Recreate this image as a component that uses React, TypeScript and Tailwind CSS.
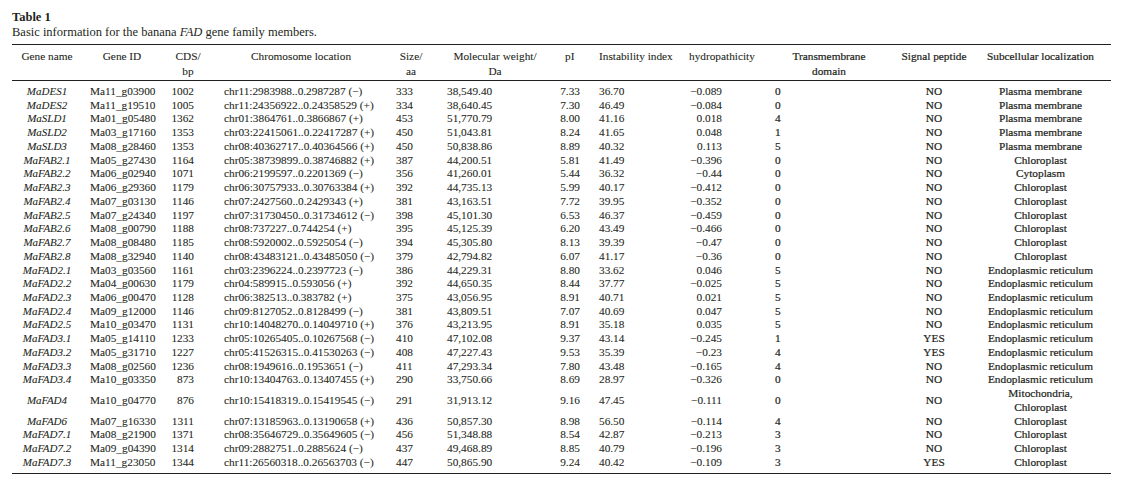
type Row = [string, string, string, string, string, string, string, string, string, string, string, string]

const ER = "Endoplasmic reticulum"
const PM = "Plasma membrane"
const CP = "Chloroplast"

const rows: Row[] = [
  ["MaDES1", "Ma11_g03900", "1002", "chr11:2983988..0.2987287 (−)", "333", "38,549.40", "7.33", "36.70", "−0.089", "0", "NO", PM],
  ["MaDES2", "Ma11_g19510", "1005", "chr11:24356922..0.24358529 (+)", "334", "38,640.45", "7.30", "46.49", "−0.084", "0", "NO", PM],
  ["MaSLD1", "Ma01_g05480", "1362", "chr01:3864761..0.3866867 (+)", "453", "51,770.79", "8.00", "41.16", "0.018", "4", "NO", PM],
  ["MaSLD2", "Ma03_g17160", "1353", "chr03:22415061..0.22417287 (+)", "450", "51,043.81", "8.24", "41.65", "0.048", "1", "NO", PM],
  ["MaSLD3", "Ma08_g28460", "1353", "chr08:40362717..0.40364566 (+)", "450", "50,838.86", "8.89", "40.32", "0.113", "5", "NO", PM],
  ["MaFAB2.1", "Ma05_g27430", "1164", "chr05:38739899..0.38746882 (+)", "387", "44,200.51", "5.81", "41.49", "−0.396", "0", "NO", CP],
  ["MaFAB2.2", "Ma06_g02940", "1071", "chr06:2199597..0.2201369 (−)", "356", "41,260.01", "5.44", "36.32", "−0.44", "0", "NO", "Cytoplasm"],
  ["MaFAB2.3", "Ma06_g29360", "1179", "chr06:30757933..0.30763384 (+)", "392", "44,735.13", "5.99", "40.17", "−0.412", "0", "NO", CP],
  ["MaFAB2.4", "Ma07_g03130", "1146", "chr07:2427560..0.2429343 (+)", "381", "43,163.51", "7.72", "39.95", "−0.352", "0", "NO", CP],
  ["MaFAB2.5", "Ma07_g24340", "1197", "chr07:31730450..0.31734612 (−)", "398", "45,101.30", "6.53", "46.37", "−0.459", "0", "NO", CP],
  ["MaFAB2.6", "Ma08_g00790", "1188", "chr08:737227..0.744254 (+)", "395", "45,125.39", "6.20", "43.49", "−0.466", "0", "NO", CP],
  ["MaFAB2.7", "Ma08_g08480", "1185", "chr08:5920002..0.5925054 (−)", "394", "45,305.80", "8.13", "39.39", "−0.47", "0", "NO", CP],
  ["MaFAB2.8", "Ma08_g32940", "1140", "chr08:43483121..0.43485050 (−)", "379", "42,794.82", "6.07", "41.17", "−0.36", "0", "NO", CP],
  ["MaFAD2.1", "Ma03_g03560", "1161", "chr03:2396224..0.2397723 (−)", "386", "44,229.31", "8.80", "33.62", "0.046", "5", "NO", ER],
  ["MaFAD2.2", "Ma04_g00630", "1179", "chr04:589915..0.593056 (+)", "392", "44,650.35", "8.44", "37.77", "−0.025", "5", "NO", ER],
  ["MaFAD2.3", "Ma06_g00470", "1128", "chr06:382513..0.383782 (+)", "375", "43,056.95", "8.91", "40.71", "0.021", "5", "NO", ER],
  ["MaFAD2.4", "Ma09_g12000", "1146", "chr09:8127052..0.8128499 (−)", "381", "43,809.51", "7.07", "40.69", "0.047", "5", "NO", ER],
  ["MaFAD2.5", "Ma10_g03470", "1131", "chr10:14048270..0.14049710 (+)", "376", "43,213.95", "8.91", "35.18", "0.035", "5", "NO", ER],
  ["MaFAD3.1", "Ma05_g14110", "1233", "chr05:10265405..0.10267568 (−)", "410", "47,102.08", "9.37", "43.14", "−0.245", "1", "YES", ER],
  ["MaFAD3.2", "Ma05_g31710", "1227", "chr05:41526315..0.41530263 (−)", "408", "47,227.43", "9.53", "35.39", "−0.23", "4", "YES", ER],
  ["MaFAD3.3", "Ma08_g02560", "1236", "chr08:1949616..0.1953651 (−)", "411", "47,293.34", "7.80", "43.48", "−0.165", "4", "NO", ER],
  ["MaFAD3.4", "Ma10_g03350", "873", "chr10:13404763..0.13407455 (+)", "290", "33,750.66", "8.69", "28.97", "−0.326", "0", "NO", ER],
  ["MaFAD4", "Ma10_g04770", "876", "chr10:15418319..0.15419545 (−)", "291", "31,913.12", "9.16", "47.45", "−0.111", "0", "NO", "Mitochondria,|Chloroplast"],
  ["MaFAD6", "Ma07_g16330", "1311", "chr07:13185963..0.13190658 (+)", "436", "50,857.30", "8.98", "56.50", "−0.114", "4", "NO", CP],
  ["MaFAD7.1", "Ma08_g21900", "1371", "chr08:35646729..0.35649605 (−)", "456", "51,348.88", "8.54", "42.87", "−0.213", "3", "NO", CP],
  ["MaFAD7.2", "Ma09_g04390", "1314", "chr09:2882751..0.2885624 (−)", "437", "49,468.89", "8.85", "40.79", "−0.196", "3", "NO", CP],
  ["MaFAD7.3", "Ma11_g23050", "1344", "chr11:26560318..0.26563703 (−)", "447", "50,865.90", "9.24", "40.42", "−0.109", "3", "YES", CP],
]

// column widths, header cell classes and body cell classes, left to right
const columns = [
  { head: ["Gene name"], col: "w-[70px]", th: "text-center", td: "text-center italic text-[11px]" },
  { head: ["Gene ID"], col: "w-[80px]", th: "text-center", td: "text-left pl-[8px]" },
  { head: ["CDS/", "bp"], col: "w-[52px]", th: "text-center", td: "text-right pr-[20px]" },
  { head: ["Chromosome location"], col: "w-[174px]", th: "text-center", td: "text-left pl-[10px]" },
  { head: ["Size/", "aa"], col: "w-[46px]", th: "text-center", td: "text-left pl-[8px]" },
  { head: ["Molecular weight/", "Da"], col: "w-[122px]", th: "text-center", td: "text-left pl-[13px]" },
  { head: ["pI"], col: "w-[36px]", th: "text-left pl-[9px]", td: "text-right pr-[12px]" },
  { head: ["Instability index"], col: "w-[92px]", th: "text-left pl-[7px]", td: "text-left pl-[7px]" },
  { head: ["hydropathicity"], col: "w-[76px]", th: "text-left pl-[5px]", td: "text-right pr-[38px]" },
  { head: ["Transmembrane", "domain"], col: "w-[138px]", th: "text-center heavy", td: "text-left pl-[15px] heavy" },
  { head: ["Signal peptide"], col: "w-[72px]", th: "text-center heavy", td: "text-center heavy" },
  { head: ["Subcellular localization"], col: "w-[141px]", th: "text-center heavy", td: "text-center heavy" },
]

function cls(base: string) {
  // the last three columns print a little heavier in the source
  return base.includes("heavy")
    ? base.replace("heavy", "") + " [-webkit-text-stroke:0.22px_#231f20]"
    : base + " [-webkit-text-stroke:0.08px_#231f20]"
}

export default function App() {
  return (
    <div className="h-[482px] w-[1123px] overflow-hidden bg-white px-[12px] pt-[10px] font-['Liberation_Serif','Times_New_Roman',serif] text-[#231f20]">
      <div className="text-[12.5px] font-bold leading-[15px]">Table 1</div>
      <div className="mb-[4px] text-[12.5px] leading-[15px]">
        Basic information for the banana <i>FAD</i> gene family members.
      </div>

      <table className="w-[1099px] table-fixed border-collapse text-[11.3px]">
        <colgroup>
          {columns.map((c, i) => (
            <col key={i} className={c.col} />
          ))}
        </colgroup>
        <thead>
          <tr className="border-y border-[#231f20]">
            {columns.map((c, i) => (
              <th
                key={i}
                className={`${cls(c.th)} px-0 pt-[4px] pb-[2px] align-top font-normal leading-[14.5px]`}
              >
                {c.head.map((line, j) => (
                  <div key={j}>{line}</div>
                ))}
              </th>
            ))}
          </tr>
        </thead>
        <tbody className="border-b border-[#231f20]">
          {rows.map((r, ri) => {
            const pad =
              ri === 0 ? "pt-[4px]" : ri === rows.length - 1 ? "pb-[3px]" : ""

            return (
              <tr key={r[0]}>
                {r.map((v, ci) => (
                  <td
                    key={ci}
                    className={`${cls(columns[ci].td)} ${pad} whitespace-nowrap align-middle leading-[13.73px]`}
                  >
                    {v.split("|").map((line, li) => (
                      <div key={li}>{line}</div>
                    ))}
                  </td>
                ))}
              </tr>
            )
          })}
        </tbody>
      </table>
    </div>
  )
}
